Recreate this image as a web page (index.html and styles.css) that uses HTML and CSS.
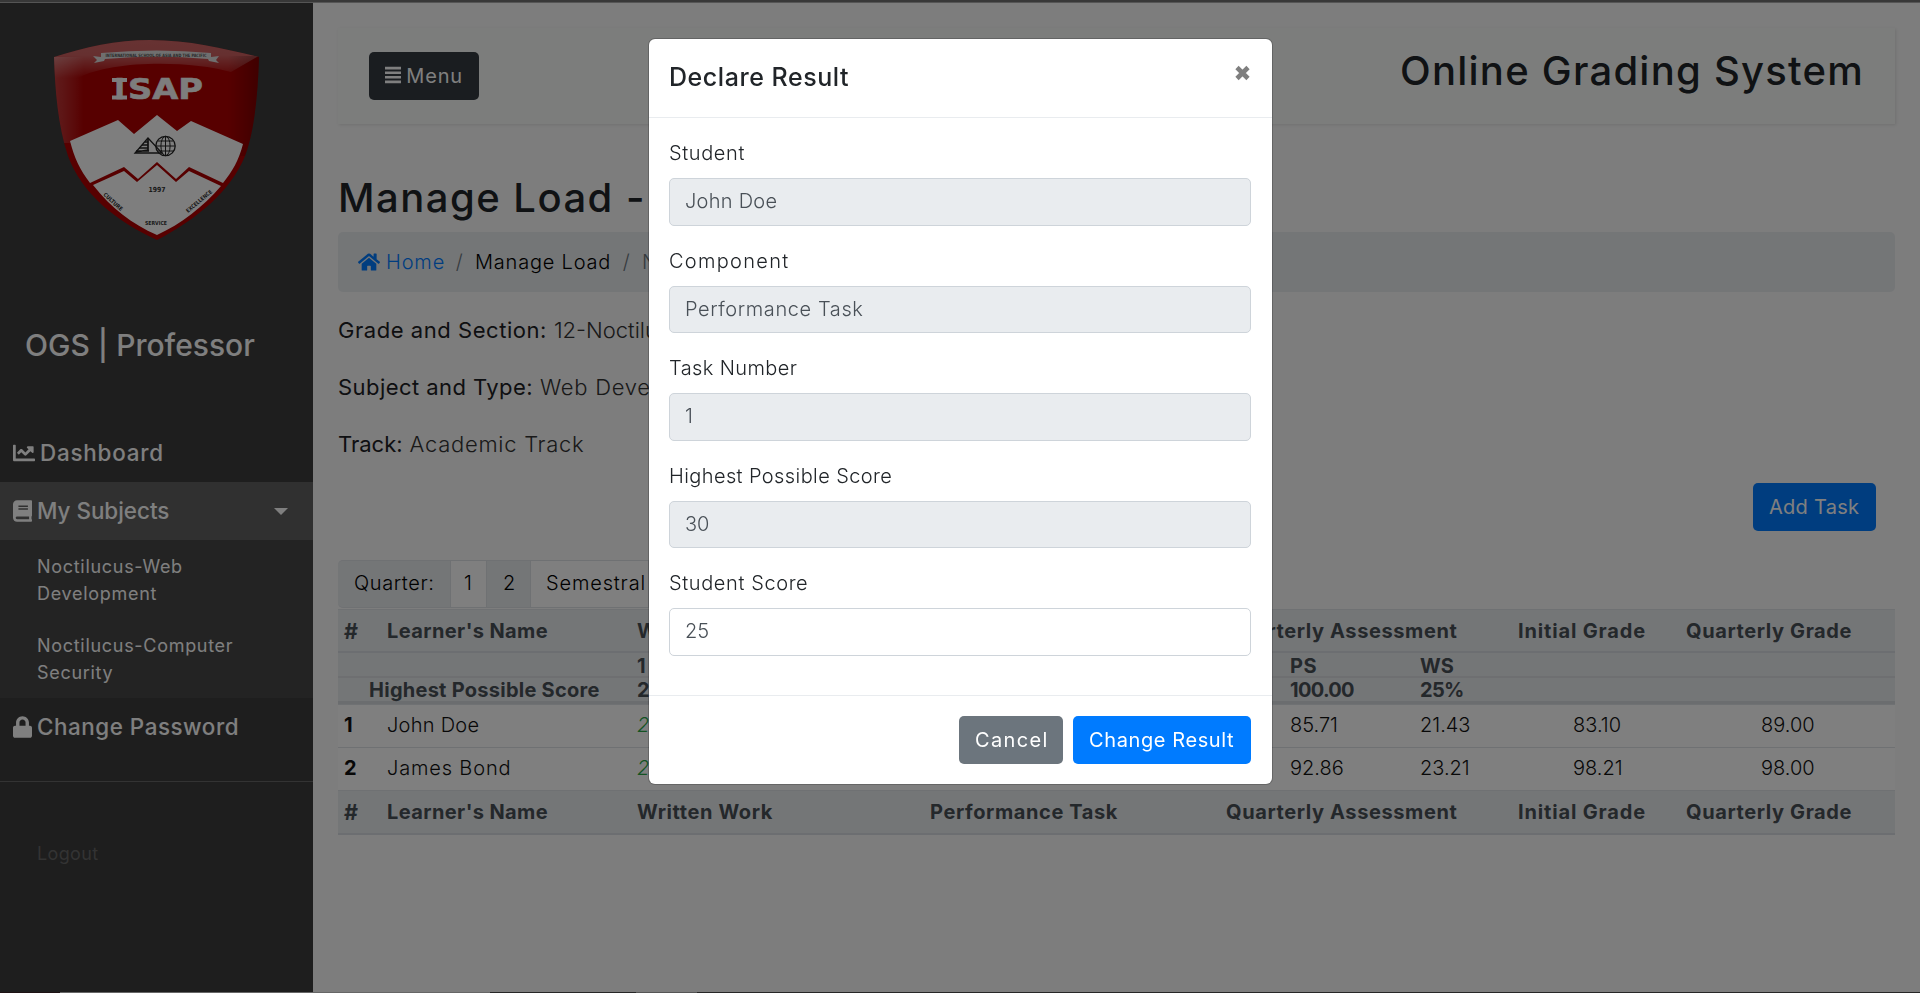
FILE: index.html
```html
<!DOCTYPE html>
<html lang="en">
<head>
<meta charset="utf-8">
<title>Online Grading System</title>
<link rel="stylesheet" href="styles.css">
</head>
<body>
<div class="window-edge"></div>
<div class="wrapper">
  <nav class="sidebar">
    <div class="logo">
      <svg width="206" height="202" viewBox="53 39 206 202">
        <defs>
          <linearGradient id="gloss" x1="0" y1="0" x2="0" y2="1"><stop offset="0" stop-color="#fff" stop-opacity=".4"/><stop offset=".45" stop-color="#fff" stop-opacity=".38"/><stop offset="1" stop-color="#fff" stop-opacity="0"/></linearGradient>
          <linearGradient id="side" x1="0" y1="0" x2="1" y2="0"><stop offset="0" stop-color="#fff" stop-opacity=".26"/><stop offset=".5" stop-color="#fff" stop-opacity=".14"/><stop offset="1" stop-color="#fff" stop-opacity="0"/></linearGradient>
          <linearGradient id="shade" x1="0" y1="0" x2="1" y2="0"><stop offset="0" stop-color="#000" stop-opacity="0"/><stop offset="1" stop-color="#000" stop-opacity=".3"/></linearGradient>
          <clipPath id="shield"><path d="M54 57C85 47 116 40 150 40C190 40 225 49 259 57C258 90 255 130 245 156C231 191 196 220 157 240C116 221 82 194 68 156C58 126 55 90 54 57Z"/></clipPath>
        </defs>
        <g clip-path="url(#shield)">
          <rect x="50" y="36" width="212" height="206" fill="#ae0000"/>
          <path d="M50 36H262V54L231 72C190 60 110 60 78 78L50 78Z" fill="url(#gloss)"/>
          <rect x="50" y="57" width="34" height="86" fill="url(#side)"/>
          <rect x="228" y="56" width="34" height="100" fill="url(#shade)"/>
        </g>
        <path d="M70 141L118 120L134 134L157 115L177 131L191 121L243 144C239 160 232 172 223 183L189 167L176 179L157 162L138 179L124 167L90 183C80 170 74 157 70 141Z" fill="#fdfdfd"/>
        <path d="M93 185L124 171L137 182L157 165L176 182L189 171L221 186C203 207 181 224 157 235C132 224 111 208 93 185Z" fill="#fdfdfd"/>
        <path d="M93 56L101 57V53Q157 48 211 53V57L219 56L216 60L219 63L209 61L208 59Q157 54 105 59L104 61L94 63L97 60Z" fill="#dedede"/>
        <text x="156" y="57" class="logo-band" text-anchor="middle" textLength="101" lengthAdjust="spacingAndGlyphs">INTERNATIONAL SCHOOL OF ASIA AND THE PACIFIC</text>
        <text y="99" class="logo-name"><tspan x="114.2">I</tspan><tspan x="128" textLength="75" lengthAdjust="spacingAndGlyphs">SAP</tspan></text>
        <path d="M112 78H127V82H112ZM112 95.500H127V99.500H112Z" fill="#fafafa"/>
        <path d="M148 138L135 153H162Z" fill="#fdfdfd" stroke="#222" stroke-width="1.3"/>
        <path d="M148 138V150L136 152M145 142H148M142 145H148M139 148H148M136 151H149" stroke="#222" stroke-width="1.7" fill="none"/>
        <g fill="none" stroke="#222" stroke-width="1"><circle cx="165.500" cy="146" r="9.700" stroke-width="1.300"/><ellipse cx="165.500" cy="146" rx="4.600" ry="9.700"/><path d="M165.500 136V156M156 146H175M158 141H173M158 151H173"/></g>
        <text x="157" y="192" class="logo-small" text-anchor="middle" textLength="17" lengthAdjust="spacingAndGlyphs">1997</text>
        <text x="156" y="225" class="logo-small logo-word" text-anchor="middle" textLength="22" lengthAdjust="spacingAndGlyphs">SERVICE</text>
        <text transform="translate(103 195) rotate(43)" class="logo-small logo-word" textLength="24" lengthAdjust="spacingAndGlyphs">CULTURE</text>
        <text transform="translate(188 213) rotate(-40)" class="logo-small logo-word" textLength="32" lengthAdjust="spacingAndGlyphs">EXCELLENCE</text>
      </svg>
    </div>
    <h3 class="brand">OGS | Professor</h3>
    <ul class="menu">
      <li class="item"><svg class="ic-chart" viewBox="0 0 512 512"><path d="M496 384H64V80c0-8.840-7.160-16-16-16H16C7.160 64 0 71.160 0 80v336c0 17.670 14.330 32 32 32h464c8.840 0 16-7.160 16-16v-32c0-8.840-7.160-16-16-16zM464 96H345.940c-21.380 0-32.090 25.850-16.970 40.970l32.400 32.400L288 242.750l-73.370-73.370c-12.500-12.500-32.760-12.500-45.250 0l-68.690 68.690c-6.250 6.250-6.250 16.380 0 22.630l22.620 22.620c6.250 6.250 16.380 6.250 22.630 0L192 237.250l73.370 73.370c12.500 12.500 32.760 12.500 45.250 0l96-96 32.400 32.400c15.120 15.120 40.970 4.410 40.970-16.970V112c.01-8.840-7.150-16-15.990-16z"/></svg><span class="sp4">Dashboard</span></li>
      <li class="item active"><svg class="ic-solid" viewBox="0 0 448 512"><path d="M448 360V24c0-13.300-10.700-24-24-24H96C43 0 0 43 0 96v320c0 53 43 96 96 96h328c13.300 0 24-10.700 24-24v-16c0-7.500-3.500-14.300-8.900-18.700-4.200-15.400-4.200-59.300 0-74.700 5.400-4.300 8.900-11.100 8.900-18.600zM128 134c0-3.300 2.700-6 6-6h212c3.300 0 6 2.700 6 6v20c0 3.300-2.700 6-6 6H134c-3.300 0-6-2.700-6-6v-20zm0 64c0-3.300 2.700-6 6-6h212c3.300 0 6 2.700 6 6v20c0 3.300-2.700 6-6 6H134c-3.300 0-6-2.700-6-6v-20zm253.400 250H96c-17.700 0-32-14.300-32-32 0-17.600 14.400-32 32-32h285.400c-1.900 17.100-1.900 46.900 0 64z"/></svg><span class="sp0">My Subjects</span><i class="caret"></i></li>
      <li class="sub">Noctilucus-Web Development</li>
      <li class="sub">Noctilucus-Computer Security</li>
      <li class="item"><svg class="ic-solid" viewBox="0 0 448 512"><path d="M400 224h-24v-72C376 68.200 307.800 0 224 0S72 68.200 72 152v72H48c-26.500 0-48 21.500-48 48v192c0 26.500 21.500 48 48 48h352c26.500 0 48-21.500 48-48V272c0-26.500-21.500-48-48-48zm-104 0H152v-72c0-39.700 32.300-72 72-72s72 32.300 72 72v72z"/></svg><span>Change Password</span></li>
    </ul>
    <div class="logout sp2">Logout</div>
  </nav>

  <main class="content">
    <header class="navbar">
      <button class="btn dark"><svg class="ic-menu" viewBox="0 0 18 18"><path d="M0 1.500H18M0 6.500H18M0 11.500H18M0 16.500H18" stroke="currentColor" stroke-width="3"/></svg><span class="sp4">Menu</span></button>
      <h2 class="title">Online Grading System</h2>
    </header>
    <h2 class="page-title">Manage Load -</h2>
    <div class="breadcrumb">
      <a class="home"><svg class="ic-home" viewBox="0 0 576 512"><path d="M280.370 148.260L96 300.110V464a16 16 0 0 0 16 16l112.060-.29a16 16 0 0 0 15.920-16V368a16 16 0 0 1 16-16h64a16 16 0 0 1 16 16v95.640a16 16 0 0 0 16 16.050L464 480a16 16 0 0 0 16-16V300L295.670 148.260a12.190 12.190 0 0 0-15.300 0zM571.600 251.470L488 182.560V44.050a12 12 0 0 0-12-12h-56a12 12 0 0 0-12 12v72.610L318.470 43a48 48 0 0 0-61 0L4.340 251.470a12 12 0 0 0-1.600 16.900l25.500 31A12 12 0 0 0 45.150 301l235.220-193.740a12.190 12.190 0 0 1 15.300 0L530.900 301a12 12 0 0 0 16.900-1.600l25.500-31a12 12 0 0 0-1.700-16.930z"/></svg><span class="sp4">Home</span></a>
      <span class="sep">/</span><span class="crumb">Manage Load</span><span class="sep">/</span><span class="muted">N</span>
    </div>
    <div class="facts">
      <p><b>Grade and Section:</b> <span class="sp0">12-Noctilu</span></p>
      <p><b class="sp2">Subject and Type:</b> Web Deve</p>
      <p><b class="sp0">Track:</b> Academic Track</p>
    </div>
    <div class="actions"><button class="btn primary sp1">Add Task</button></div>
    <div class="pager"><span class="pg grey quarter">Quarter:</span><span class="pg one">1</span><span class="pg grey two">2</span><span class="pg sem sp4">Semestral</span></div>
    <div class="table">
      <div class="row head"><b class="hash">#</b><b class="sp2">Learner's Name</b><b>W</b><b></b><b>Quarterly Assessment</b><b class="sp4">Initial Grade</b><b>Quarterly Grade</b></div>
      <div class="row scores thin"><b></b><b></b><b>1</b><b>PS</b><b class="sp0">WS</b><b></b><b></b></div>
      <div class="row scores thin last"><b></b><b class="hps sp1">Highest Possible Score</b><b>2</b><b class="spn">100.00</b><b class="spn">25%</b><b></b><b></b></div>
      <div class="row scores body"><b>1</b><span class="sp1">John Doe</span><i>2</i><span class="sp0">85.71</span><span class="sp0">21.43</span><span class="mid sp0">83.10</span><span class="mid sp0">89.00</span></div>
      <div class="row scores body"><b>2</b><span class="sp4">James Bond</span><i>2</i><span class="sp0">92.86</span><span class="sp0">23.21</span><span class="mid sp0">98.21</span><span class="mid sp0">98.00</span></div>
      <div class="row head foot"><b class="hash">#</b><b class="sp2">Learner's Name</b><b>Written Work</b><b>Performance Task</b><b>Quarterly Assessment</b><b class="sp4">Initial Grade</b><b>Quarterly Grade</b></div>
    </div>
  </main>
</div>
<div class="backdrop">
  <div class="modal">
    <div class="modal-head"><h5>Declare Result</h5><svg class="close" width="15" height="16" viewBox="0 0 15 16"><path d="M2 2.500L13 13.500M13 2.500L2 13.500" stroke="#7f7f7f" stroke-width="4.600"/></svg></div>
    <div class="modal-body">
      <label>Student</label><div class="input sp1">John Doe</div>
      <label class="sp6">Component</label><div class="input">Performance Task</div>
      <label class="sp2">Task Number</label><div class="input">1</div>
      <label class="sp2">Highest Possible Score</label><div class="input sp0">30</div>
      <label>Student Score</label><div class="input edit sp0">25</div>
    </div>
    <div class="modal-foot"><button class="btn secondary sp6">Cancel</button><button class="btn primary">Change Result</button></div>
  </div>
</div>
<div class="bottom-edge"></div>
</body>
</html>
```
FILE: styles.css
```css
* { box-sizing: border-box; }
body { margin: 0; height: 993px; overflow: hidden; background: #fafafa; color: #212529; font: 350 20px/30px Inter, "Open Sans", sans-serif; letter-spacing: .03em; }
h2, h3, h5, p, ul { margin: 0; padding: 0; font-weight: 500; }
.sp0 { letter-spacing: 0; } .sp1 { letter-spacing: .013em; } .sp2 { letter-spacing: .02em; }
.sp4 { letter-spacing: .042em; } .sp6 { letter-spacing: .065em; } .spn { letter-spacing: -.035em; }

.window-edge { height: 3px; background: #707070; border-bottom: 1px solid #aaa; }
.wrapper { display: flex; height: 989px; }

.sidebar { width: 313px; height: 989px; background: #3c3c3c; color: #fff; font-weight: 400; flex: none; }
.logo { height: 294px; padding: 36px 0 0 53px; }
.logo svg { display: block; }
.logo-band { font: 700 4.5px "DejaVu Sans", sans-serif; letter-spacing: 0; fill: #555; }
.logo-name { font: 700 29px "DejaVu Sans", sans-serif; letter-spacing: 0; fill: #fafafa; stroke: #fafafa; stroke-width: .6; }
.logo-small { font: 700 7px "DejaVu Sans", sans-serif; letter-spacing: 0; fill: #333; }
.logo-word { font-size: 5.5px; }
.brand { height: 127px; padding-left: 25px; font-size: 30px; line-height: 97px; letter-spacing: 0; }
.menu { list-style: none; }
.item { height: 58px; display: flex; align-items: center; padding: 0 25px 0 13px; font-size: 22.4px; line-height: 34px; gap: 5px; letter-spacing: .024em; }
.item .sp4 { letter-spacing: .035em; }
.item svg { fill: currentColor; flex: none; }
.item.active { background: #606060; }
.ic-chart { width: 22px; height: 22px; }
.ic-solid { width: 19px; height: 22px; }
.caret { margin-left: auto; border: 7px solid transparent; border-top-color: #fff; border-bottom: 0; }
.sub { height: 79px; padding: 12.5px 70px 0 37px; background: #464646; font-size: 18px; line-height: 27px; font-weight: 400; letter-spacing: .039em; }
.logout { margin-top: 25px; border-top: 1px solid #666; padding: 58px 0 0 37px; font-size: 18px; line-height: 27px; color: #666; }

.content { flex: 1; padding: 25px 25px 0; }
.navbar { height: 96px; padding: 24px 32px 0 31px; display: flex; justify-content: space-between; background: #f8fbf9; box-shadow: 1px 1px 3px rgba(0,0,0,.1); }
.btn { height: 48px; padding: 0 16px; border: 0; border-radius: 5px; color: #fff; font: inherit; font-weight: 400; display: flex; align-items: center; letter-spacing: .03em; }
.btn.sp1 { letter-spacing: .013em; } .btn.sp6 { letter-spacing: .068em; }
.dark { width: 110px; background: #343a40; gap: 5px; }
.ic-menu { width: 18px; height: 18px; margin-bottom: 3px; }
.primary { background: #007bff; } .secondary { background: #6c757d; }
.title { font-size: 40px; line-height: 38px; letter-spacing: .031em; margin-right: -1px; }
.page-title { margin-top: 50px; height: 58px; font-size: 40px; line-height: 48px; letter-spacing: .037em; white-space: nowrap; }
.breadcrumb { height: 60px; border-radius: 5px; background: #e9ecef; padding: 0 20px; display: flex; align-items: center; color: #000; }
.home { color: #007bff; display: flex; align-items: center; gap: 6px; width: 86px; }
.ic-home { width: 22px; height: 20px; fill: currentColor; flex: none; }
.sep { width: 31px; text-align: center; color: #6c757d; }
.crumb { width: 136px; white-space: nowrap; letter-spacing: .04em; } .muted { color: #6c757d; }
.facts { height: 191px; padding-top: 22px; font-size: 22px; color: #333; }
.facts p { height: 57px; line-height: 33px; font-weight: 300; letter-spacing: .033em; }
.facts b { font-weight: 400; color: #1d2124; }
.facts b:not([class]) { letter-spacing: .025em; }
.actions { height: 77px; display: flex; justify-content: flex-end; padding-right: 19px; }
.actions .btn { width: 123px; }
.pager { display: flex; height: 48px; width: 311px; color: #000; }
.pg { height: 48px; line-height: 45px; border: 1px solid #dee2e6; border-left: 0; background: #fff; padding-left: 16px; }
.pg.grey { background: #e9ecef; } .quarter { width: 113px; border-radius: 5px 0 0 5px; }
.one { width: 36px; padding-left: 13px; } .two { width: 44px; } .sem { flex: 1; padding-left: 15px; }

.table { margin-top: 1px; }
.row { display: grid; grid-template-columns: 43px 250px 293px 296px 292px 168px 1fr; padding-left: 6px; border-top: 1px solid #dee2e6; background: #fff; }
.row b { font-weight: 700; }
.row .hash { letter-spacing: 0; font-size: 21.5px; }
.head { height: 44px; line-height: 42px; background: #e9ecef; color: #495057; border-bottom: 2px solid #d9dde2; }
.foot { height: 45px; }
.scores { grid-template-columns: 43px 250px 653px 130px 73px 202px 1fr; }
.thin { height: 25px; line-height: 26px; background: #e9ecef; color: #495057; border-top: 0; border-bottom: 2px solid #dcdfe3; }
.last { height: 26px; line-height: 24px; border-bottom: 3px solid #d6dade; }
.hps { margin-left: -18px; }
.body { height: 43px; line-height: 40px; color: #111; }
.body i { color: #28a745; }
.scores .mid { padding-left: 80px; }
.scores .mid:last-child { padding-left: 66px; }

.backdrop { position: fixed; inset: 0; background: rgba(0,0,0,.5); }
.modal { width: 623px; height: 745px; margin: 39px 0 0 649px; background: #fff; border-radius: 6px; box-shadow: 0 0 0 1px rgba(0,0,0,.2); }
.modal-head { height: 79px; padding: 20px 22px 0 20px; border-bottom: 1px solid #e9ecef; display: flex; justify-content: space-between; }
.modal-head h5 { font-size: 25px; line-height: 37px; letter-spacing: .022em; }
.close { margin-top: 6px; }
.modal-body { height: 578px; padding: 20px 21px 20px 20px; border-bottom: 1px solid #e9ecef; }
.modal-body label { display: block; line-height: 30px; height: 40px; }
.modal-body .input { height: 47.5px; margin-bottom: 20px; border: 1px solid #ced4da; border-radius: 5px; background: #e9ecef; color: #495057; line-height: 44px; padding-left: 15px; }
.modal-body .edit { background: #fff; }
.modal-foot { padding: 20px 21px 20px 20px; display: flex; justify-content: flex-end; gap: 10px; }
.modal-foot .secondary { width: 104px; } .modal-foot .primary { width: 178px; }
.bottom-edge { position: fixed; left: 0; right: 0; bottom: 0; height: 1px; background: linear-gradient(90deg, #1e1214 60px, #666 60px 490px, #262626 490px 636px, #555 636px 697px, #262626 697px); }
```
